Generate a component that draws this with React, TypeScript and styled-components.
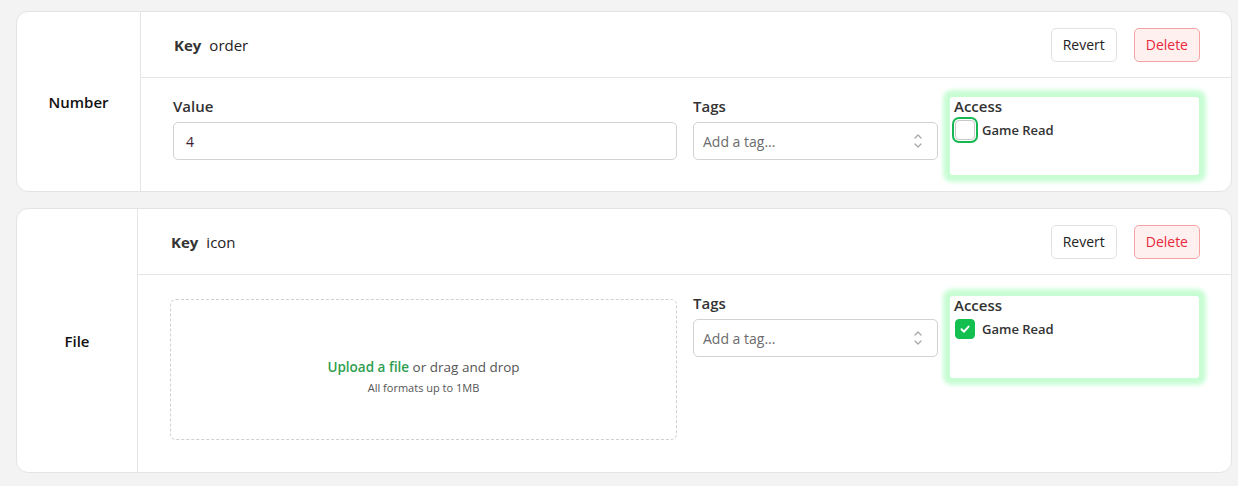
import styled, { createGlobalStyle } from "styled-components";

const GlobalStyle = createGlobalStyle`
  html, body {
    margin: 0;
    padding: 0;
    background: #f3f3f3;
  }
  body {
    font-family: "Segoe UI", "Open Sans", "Noto Sans", sans-serif;
    color: #222;
  }
`;

const Page = styled.div`
  display: flex;
  flex-direction: column;
  gap: 16px;
  padding: 11px 6px 12px 16px;
`;

const Card = styled.div`
  display: flex;
  background: #fff;
  border: 1px solid #e3e3e3;
  border-radius: 12px;
  overflow: hidden;
`;

const TypeCol = styled.div<{ $w: number }>`
  width: ${(p) => p.$w}px;
  flex: none;
  display: flex;
  align-items: center;
  justify-content: center;
  border-right: 1px solid #e5e5e5;
  font-size: 15px;
  font-weight: 600;
  color: #111;
`;

const Main = styled.div`
  flex: 1;
  display: flex;
  flex-direction: column;
`;

const Header = styled.div`
  height: 65px;
  display: flex;
  align-items: center;
  justify-content: space-between;
  padding: 0 31px 0 33px;
  border-bottom: 1px solid #e5e5e5;
`;

const KeyLine = styled.div`
  display: flex;
  align-items: baseline;
  gap: 8px;
  font-size: 15px;
  color: #222;
  b {
    font-weight: 700;
    color: #333;
  }
`;

const Actions = styled.div`
  display: flex;
  gap: 17px;
`;

const Button = styled.button<{ $danger?: boolean }>`
  height: 34px;
  padding: 0 11px;
  border-radius: 5px;
  font-family: inherit;
  font-size: 14px;
  border: 1px solid ${(p) => (p.$danger ? "#f6a3a6" : "#e2e2e2")};
  background: ${(p) => (p.$danger ? "#fff0f0" : "#fff")};
  color: ${(p) => (p.$danger ? "#e8293b" : "#222")};
`;

const Body = styled.div<{ $bottom: number }>`
  display: grid;
  grid-template-columns: 1fr 245px 245px;
  column-gap: 16px;
  align-items: start;
  padding: 18px 32px ${(p) => p.$bottom}px 32px;
`;

const Field = styled.div`
  display: flex;
  flex-direction: column;
  gap: 6px;
`;

const Label = styled.div`
  font-size: 15px;
  line-height: 20px;
  font-weight: 600;
  color: #333;
`;

const Input = styled.div`
  height: 36px;
  display: flex;
  align-items: center;
  justify-content: space-between;
  padding: 0 12px;
  border: 1px solid #d2d2d2;
  border-radius: 5px;
  font-size: 14px;
  color: #3a2030;
`;

const Select = styled(Input)`
  padding: 0 14px 0 9px;
  color: #6b6b6b;
`;

const AccessBox = styled.div<{ $h: number; $top: number }>`
  margin: ${(p) => p.$top}px 0 0 -4px;
  padding: 0 4px;
  min-height: ${(p) => p.$h}px;
  box-sizing: border-box;
  background: #fff;
  border-radius: 3px;
  box-shadow: 0 0 4px 7px #c8fdd4;
  display: flex;
  flex-direction: column;
  gap: 4px;
`;

const AccessLabel = styled(Label)`
  margin-top: -1px;
`;

const CheckRow = styled.label`
  display: flex;
  align-items: center;
  gap: 7px;
  font-size: 13px;
  font-weight: 600;
  color: #333;
`;

const Box = styled.span<{ $checked?: boolean; $focus?: boolean }>`
  width: 20px;
  height: 20px;
  margin-left: 1px;
  box-sizing: border-box;
  border-radius: 4px;
  display: flex;
  align-items: center;
  justify-content: center;
  border: 1px solid ${(p) => (p.$checked ? "#12bf4f" : "#c8c8c8")};
  background: ${(p) => (p.$checked ? "#12bf4f" : "#fff")};
  box-shadow: ${(p) => (p.$focus ? "0 0 0 1px #fff, 0 0 0 3px #16b752" : "none")};
`;

const Drop = styled.div`
  margin: 6px 0 15px;
  height: 141px;
  box-sizing: border-box;
  padding-top: 14px;
  border: 1px dashed #d0d0d0;
  border-radius: 6px;
  display: flex;
  flex-direction: column;
  align-items: center;
  justify-content: center;
  gap: 4px;
`;

const DropMain = styled.div`
  font-size: 13.5px;
  color: #555;
  span {
    color: #2f9e4e;
    font-weight: 600;
  }
`;

const DropHint = styled.div`
  font-size: 11px;
  color: #555;
`;

function UpDown() {
  return (
    <svg width="10" height="18" viewBox="0 0 10 18" fill="none" stroke="#a8a8a8" strokeWidth="1.3" strokeLinecap="round" strokeLinejoin="round">
      <path d="M2 6 L5 3 L8 6" />
      <path d="M2 12 L5 15 L8 12" />
    </svg>
  );
}

function Check() {
  return (
    <svg width="12" height="12" viewBox="0 0 12 12" fill="none" stroke="#fff" strokeWidth="2" strokeLinecap="round" strokeLinejoin="round">
      <path d="M2.5 6.3 L5 8.7 L9.6 3.6" />
    </svg>
  );
}

function TagsField() {
  return (
    <Field>
      <Label>Tags</Label>
      <Select>
        Add a tag...
        <UpDown />
      </Select>
    </Field>
  );
}

function Access({ checked, h, top }: { checked: boolean; h: number; top: number }) {
  return (
    <AccessBox $h={h} $top={top}>
      <AccessLabel>Access</AccessLabel>
      <CheckRow>
        <Box $checked={checked} $focus={!checked}>{checked && <Check />}</Box>
        Game Read
      </CheckRow>
    </AccessBox>
  );
}

function CardHeader({ name }: { name: string }) {
  return (
    <Header>
      <KeyLine>
        <b>Key</b>
        {name}
      </KeyLine>
      <Actions>
        <Button>Revert</Button>
        <Button $danger>Delete</Button>
      </Actions>
    </Header>
  );
}

export default function App() {
  return (
    <>
      <GlobalStyle />
      <Page>
        <Card>
          <TypeCol $w={123}>Number</TypeCol>
          <Main>
            <CardHeader name="order" />
            <Body $bottom={16}>
              <Field>
                <Label>Value</Label>
                <Input>4</Input>
              </Field>
              <TagsField />
              <Access checked={false} h={78} top={1} />
            </Body>
          </Main>
        </Card>
        <Card>
          <TypeCol $w={120}>File</TypeCol>
          <Main>
            <CardHeader name="icon" />
            <Body $bottom={17}>
              <Drop>
                <DropMain>
                  <span>Upload a file</span> or drag and drop
                </DropMain>
                <DropHint>All formats up to 1MB</DropHint>
              </Drop>
              <TagsField />
              <Access checked={true} h={82} top={3} />
            </Body>
          </Main>
        </Card>
      </Page>
    </>
  );
}
